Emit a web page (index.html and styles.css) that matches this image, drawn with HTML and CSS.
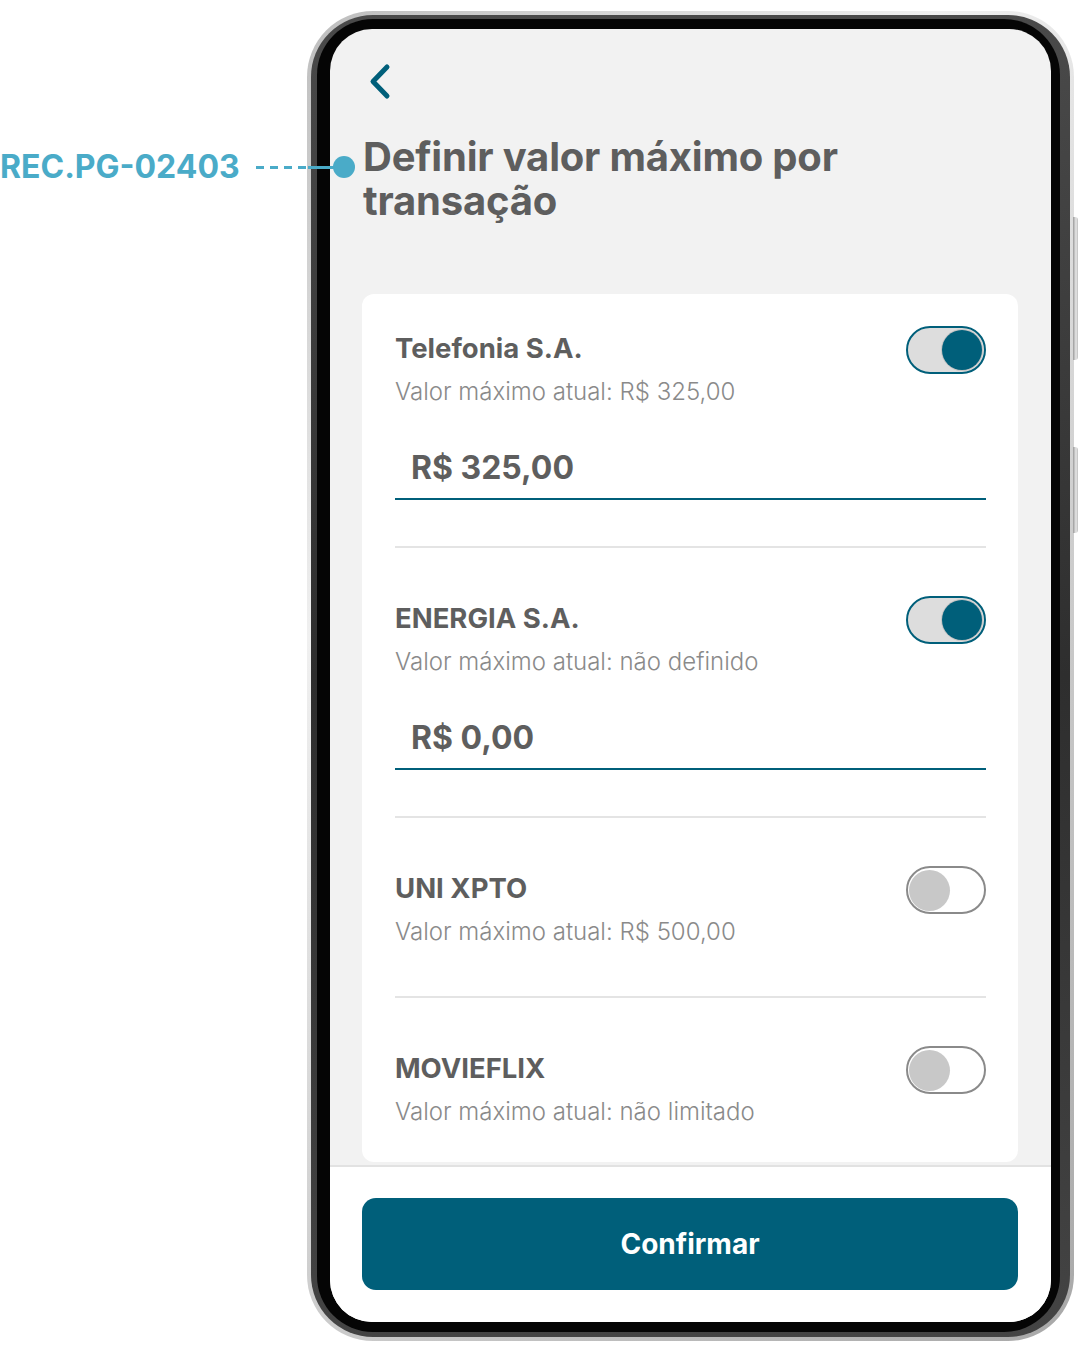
FILE: index.html
```
<!DOCTYPE html>
<html lang="pt-BR">
<head>
<meta charset="utf-8">
<title>Definir valor máximo por transação</title>
<link rel="stylesheet" href="styles.css">
</head>
<body>
<div class="page">
  <div class="annotation">
    <span class="annotation-code">REC.PG-02403</span>
    <span class="annotation-line"></span>
    <span class="annotation-dot"></span>
  </div>
  <div class="phone">
    <span class="side-btn side-btn-top"></span>
    <span class="side-btn side-btn-bottom"></span>
    <div class="frame">
      <div class="bezel">
        <div class="screen">
          <main class="content">
            <button class="back" aria-label="Voltar">
              <svg width="28" height="38" viewBox="0 0 28 38" aria-hidden="true">
                <path d="M21 5 L7 19.5 L21 34" fill="none" stroke="#005f7a" stroke-width="5" stroke-linecap="round" stroke-linejoin="round"/>
              </svg>
            </button>
            <h1 class="title">Definir valor máximo por transação</h1>
            <div class="card">
              <section class="item">
                <div class="item-head">
                  <div class="item-text">
                    <h2 class="item-name">Telefonia S.A.</h2>
                    <p class="item-limit">Valor máximo atual: R$ 325,00</p>
                  </div>
                  <span class="toggle on"><span class="knob"></span></span>
                </div>
                <div class="amount-field"><span class="amount">R$ 325,00</span></div>
              </section>
              <hr class="divider">
              <section class="item">
                <div class="item-head">
                  <div class="item-text">
                    <h2 class="item-name">ENERGIA S.A.</h2>
                    <p class="item-limit">Valor máximo atual: não definido</p>
                  </div>
                  <span class="toggle on"><span class="knob"></span></span>
                </div>
                <div class="amount-field"><span class="amount">R$ 0,00</span></div>
              </section>
              <hr class="divider">
              <section class="item compact">
                <div class="item-head">
                  <div class="item-text">
                    <h2 class="item-name">UNI XPTO</h2>
                    <p class="item-limit">Valor máximo atual: R$ 500,00</p>
                  </div>
                  <span class="toggle"><span class="knob"></span></span>
                </div>
              </section>
              <hr class="divider">
              <section class="item">
                <div class="item-head">
                  <div class="item-text">
                    <h2 class="item-name">MOVIEFLIX</h2>
                    <p class="item-limit">Valor máximo atual: não limitado</p>
                  </div>
                  <span class="toggle"><span class="knob"></span></span>
                </div>
              </section>
            </div>
          </main>
          <footer class="footer">
            <button class="confirm">Confirmar</button>
          </footer>
        </div>
      </div>
    </div>
  </div>
</div>
</body>
</html>
```
FILE: styles.css
```
* { box-sizing: border-box; }

html, body {
  margin: 0;
  padding: 0;
  background: #ffffff;
  font-family: "Inter", "Noto Sans", "Liberation Sans", sans-serif;
}

.page {
  position: relative;
  width: 1078px;
  height: 1352px;
  padding: 11px 0 0 307px;
}

/* annotation */
.annotation {
  position: absolute;
  left: 0;
  top: 147px;
  height: 40px;
  display: flex;
  align-items: center;
  z-index: 5;
}
.annotation-code {
  width: 241px;
  font-size: 32px;
  line-height: 40px;
  font-weight: 700;
  color: #4aabc8;
  white-space: nowrap;
}
.annotation-line {
  width: 79px;
  height: 3px;
  margin-left: 15px;
  background:
    linear-gradient(90deg, transparent 0 52px, #4aabc8 52px 100%),
    repeating-linear-gradient(90deg, #4aabc8 0 8px, transparent 8px 14px);
}
.annotation-dot {
  width: 22px;
  height: 22px;
  border-radius: 50%;
  background: #4aabc8;
  margin-left: -2px;
}

/* phone */
.phone {
  position: relative;
  width: 767px;
  height: 1330px;
  border-radius: 66px;
  padding: 4px;
  display: flex;
  background: linear-gradient(135deg, #bdbdbd 0%, #f0f0f0 30%, #cfcfcf 60%, #a8a8a8 100%);
}
.side-btn {
  position: absolute;
  right: -4px;
  width: 5px;
  border-radius: 0 3px 3px 0;
  background: linear-gradient(90deg, #9a9a9a, #e8e8e8 60%, #bdbdbd);
}
.side-btn-top { top: 206px; height: 143px; }
.side-btn-bottom { top: 436px; height: 86px; }

.frame {
  flex: 1;
  display: flex;
  border-radius: 62px;
  padding: 4px 10px 5px 6px;
  background: linear-gradient(180deg, #4a4a4a, #2e2e2e 50%, #444444);
}
.bezel {
  flex: 1;
  display: flex;
  border-radius: 56px;
  padding: 10px 9px 10px 13px;
  background: #050505;
}
.screen {
  flex: 1;
  display: flex;
  flex-direction: column;
  border-radius: 42px;
  overflow: hidden;
  background: #f2f2f2;
}

/* content */
.content {
  flex: 1;
  overflow: hidden;
  padding: 33px 33px 0 32px;
}
.back {
  display: block;
  padding: 0;
  margin: 0 0 0 4px;
  border: 0;
  background: none;
}
.back svg { display: block; }

.title {
  margin: 35px 0 0 1px;
  font-size: 40px;
  line-height: 44px;
  font-weight: 700;
  color: #5e5e5e;
  letter-spacing: -0.2px;
  width: 520px;
}

.card {
  margin-top: 71px;
  background: #ffffff;
  border-radius: 12px;
  padding: 32px 32px 36px 33px;
}
.item-head {
  display: flex;
  justify-content: space-between;
  align-items: flex-start;
}
.item-name {
  margin: 6px 0 0;
  font-size: 27.5px;
  line-height: 32px;
  font-weight: 700;
  color: #5e5e5e;
}
.item-limit {
  margin: 14px 0 0;
  font-size: 24px;
  line-height: 28px;
  font-weight: 300;
  color: #8a8a8a;
}
.item.compact { padding-bottom: 4px; }

.toggle {
  width: 80px;
  height: 48px;
  border-radius: 24px;
  border: 2px solid #8a8a8a;
  background: #ffffff;
  display: flex;
  align-items: center;
  justify-content: flex-start;
  padding: 0 1px;
  flex-shrink: 0;
}
.toggle .knob {
  width: 41px;
  height: 41px;
  border-radius: 50%;
  background: #c8c8c8;
}
.toggle.on {
  border-color: #005f7a;
  background: #dddddd;
  justify-content: flex-end;
}
.toggle.on .knob {
  width: 40px;
  height: 40px;
  background: #005f7a;
  box-shadow: 0 0 0 1px #c4c4c4;
  margin-right: 1px;
}

.amount-field {
  margin-top: 42px;
  padding: 0 16px 10px;
  border-bottom: 2px solid #005f7a;
}
.amount {
  display: block;
  font-size: 32px;
  line-height: 40px;
  font-weight: 700;
  color: #5e5e5e;
}

.divider {
  margin: 46px 0 48px;
  height: 2px;
  border: 0;
  background: #e4e4e4;
}

/* footer */
.footer {
  background: #ffffff;
  border-top: 2px solid #e2e2e2;
  padding: 31px 33px 32px 32px;
}
.confirm {
  display: block;
  width: 100%;
  height: 92px;
  border: 0;
  border-radius: 14px;
  background: #005f7a;
  color: #ffffff;
  font-family: "Inter", "Noto Sans", "Liberation Sans", sans-serif;
  font-size: 28px;
  font-weight: 700;
}
```
